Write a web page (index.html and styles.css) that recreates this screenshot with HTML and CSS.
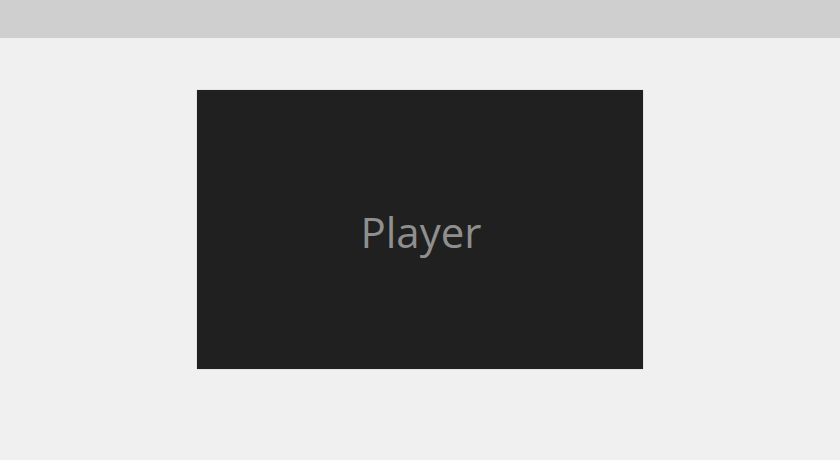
FILE: index.html
```html
<!DOCTYPE html>
<html>
<head>
<meta charset="utf-8">
<link rel="stylesheet" href="styles.css">
</head>
<body>
<div class="topbar"></div>
<main class="stage">
  <div class="player"><span class="label">Player</span></div>
</main>
</body>
</html>
```
FILE: styles.css
```css
html, body {
  margin: 0;
  padding: 0;
  background: #f0f0f0;
  width: 840px;
  height: 460px;
  overflow: hidden;
}
.topbar {
  height: 38px;
  background: #cfcfcf;
}
.stage {
  display: flex;
  justify-content: center;
  padding-top: 52px;
}
.player {
  width: 446px;
  height: 279px;
  background: #202020;
  display: flex;
  align-items: center;
  justify-content: center;
  box-shadow: 0 0 1px rgba(0,0,0,0.3);
}
.label {
  font-family: "Open Sans", "Noto Sans", sans-serif;
  font-size: 42px;
  color: #8f8f8f;
  margin-left: 2px;
  margin-top: 4px;
}
```
